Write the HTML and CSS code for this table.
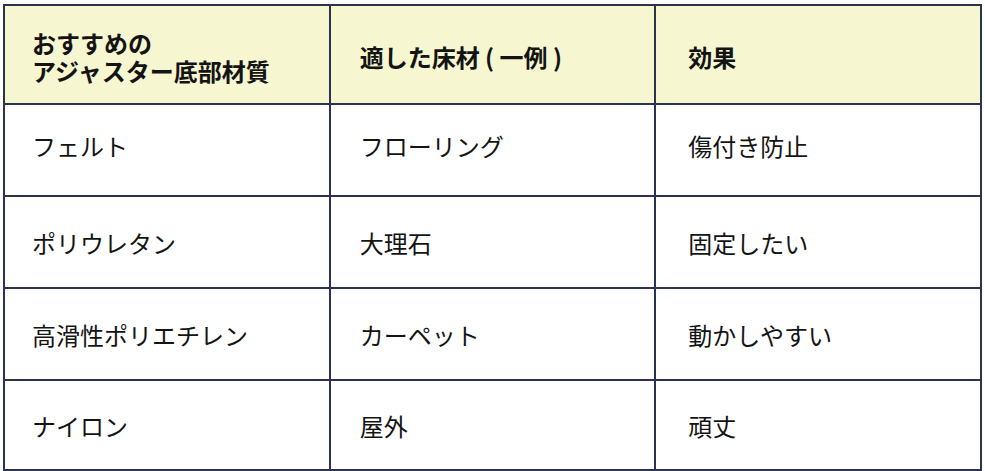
FILE: index.html
```html
<!DOCTYPE html>
<html lang="ja">
<head>
<meta charset="utf-8">
<title>アジャスター底部材質</title>
<link rel="stylesheet" href="styles.css">
</head>
<body>
<table class="spec">
  <thead>
    <tr class="head-row">
      <th>おすすめの<br>アジャスター底部材質</th>
      <th>適した床材 ( 一例 )</th>
      <th>効果</th>
    </tr>
  </thead>
  <tbody>
    <tr class="row first">
      <td>フェルト</td>
      <td>フローリング</td>
      <td>傷付き防止</td>
    </tr>
    <tr class="row">
      <td>ポリウレタン</td>
      <td>大理石</td>
      <td>固定したい</td>
    </tr>
    <tr class="row">
      <td>高滑性ポリエチレン</td>
      <td>カーペット</td>
      <td>動かしやすい</td>
    </tr>
    <tr class="row last">
      <td>ナイロン</td>
      <td>屋外</td>
      <td>頑丈</td>
    </tr>
  </tbody>
</table>
</body>
</html>
```
FILE: styles.css
```css
html, body {
  margin: 0;
  background: #ffffff;
}
body {
  padding: 4px 0 0 3px;
  font-family: "Noto Sans CJK JP", "Noto Sans", sans-serif;
  color: #141414;
}
.spec {
  border-collapse: collapse;
  width: 979px;
  table-layout: fixed;
  font-size: 24px;
}
.spec th,
.spec td {
  border: 2px solid #2c3350;
  text-align: left;
  vertical-align: middle;
  padding: 0 10px 0 27px;
}
.spec th:nth-child(2),
.spec td:nth-child(2) {
  padding-left: 29px;
}
.spec th:nth-child(3),
.spec td:nth-child(3) {
  padding-left: 32px;
}
.spec th {
  background: #f6f6d1;
  font-weight: 700;
  line-height: 28px;
  height: 92px;
  padding-top: 5px;
}
.row td {
  height: 88px;
  line-height: 30px;
  font-weight: 400;
  padding-top: 2px;
}
.row.first td {
  height: 82px;
  padding-top: 0;
  padding-bottom: 8px;
}
.row.last td {
  height: 86px;
}
```
